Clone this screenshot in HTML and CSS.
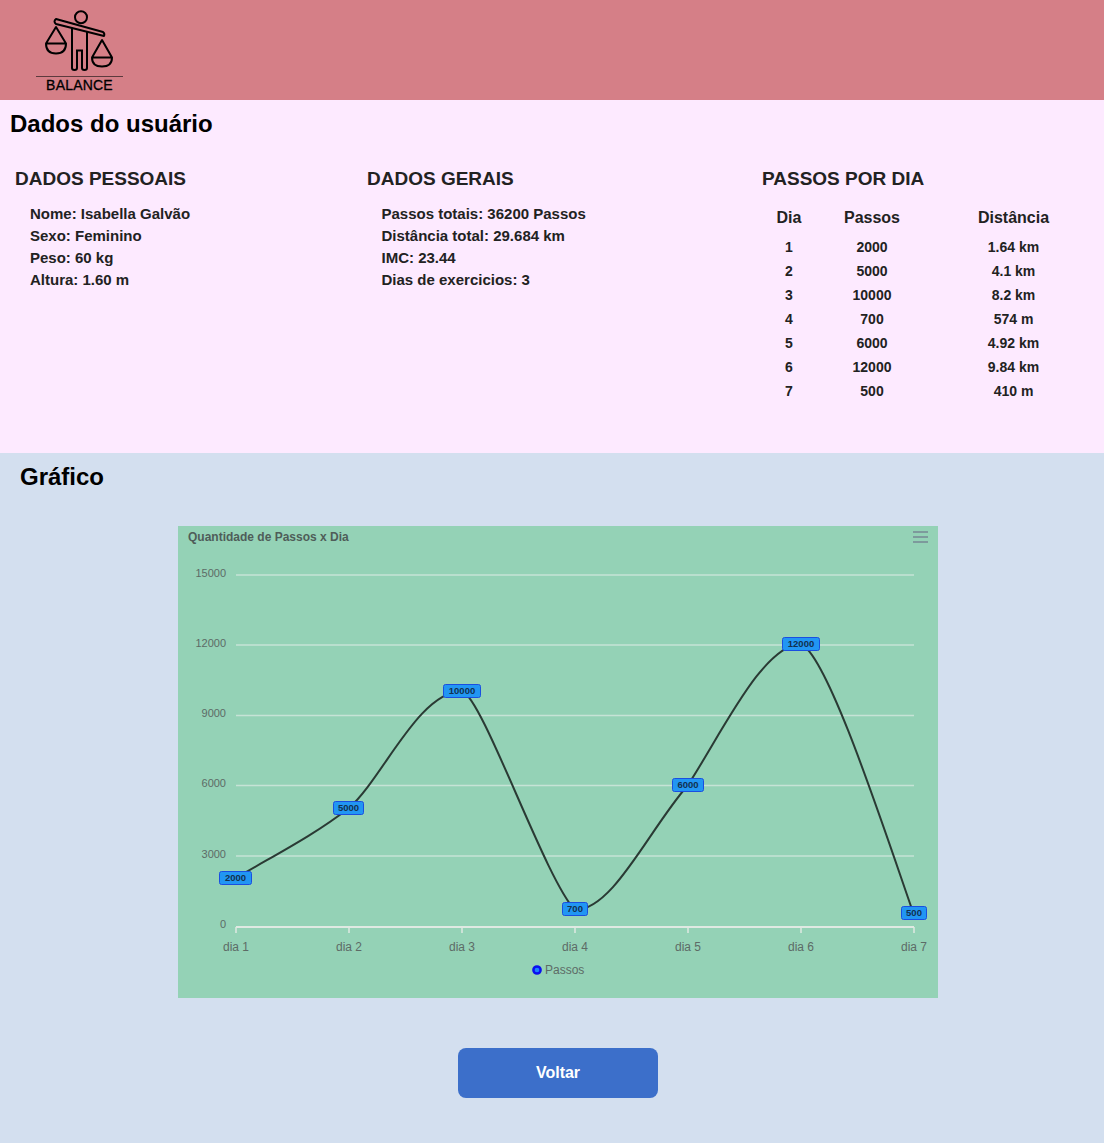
FILE: index.html
```html
<!DOCTYPE html>
<html lang="pt-BR">
<head>
  <meta charset="UTF-8">
  <meta name="viewport" content="width=device-width, initial-scale=1.0">
  <title>Balance</title>
  <link rel="stylesheet" href="styles.css">
</head>
<body>
  <header class="topo">
    <div class="logo">
      <svg class="logo-icone" viewBox="0 0 87 76" width="87" height="76" aria-hidden="true">
        <circle cx="45" cy="17.300" r="6" fill="none" stroke="#000" stroke-width="2"/>
        <path d="M20 19 L67 32 Q69 33.500 68 36 L20 24 Q17 21.500 20 19 Z" fill="none" stroke="#000" stroke-width="2" stroke-linejoin="round"/>
        <path d="M36 27.500 V68 Q36 70 38.500 70 Q41 70 41 68 V50.500 H46 V68 Q46 70 48.500 70 Q51 70 51 68 V31" fill="none" stroke="#000" stroke-width="2"/>
        <path d="M20 27 L10 43.500 H30 Z M10 43.500 Q10 53.500 20 53.500 Q30 53.500 30 43.500" fill="none" stroke="#000" stroke-width="2" stroke-linejoin="round"/>
        <path d="M66 40 L56 57.500 H76 Z M56 57.500 Q56 66.500 66 66.500 Q76 66.500 76 57.500" fill="none" stroke="#000" stroke-width="2" stroke-linejoin="round"/>
      </svg>
      <div class="logo-nome">BALANCE</div>
    </div>
  </header>

  <section class="dados">
    <h1 class="dados-titulo">Dados do usuário</h1>
    <div class="colunas">
      <div class="coluna coluna-pessoais">
        <h2>DADOS PESSOAIS</h2>
        <p>Nome: Isabella Galvão</p>
        <p>Sexo: Feminino</p>
        <p>Peso: 60 kg</p>
        <p>Altura: 1.60 m</p>
      </div>
      <div class="coluna coluna-gerais">
        <h2>DADOS GERAIS</h2>
        <p>Passos totais: 36200 Passos</p>
        <p>Distância total: 29.684 km</p>
        <p>IMC: 23.44</p>
        <p>Dias de exercicios: 3</p>
      </div>
      <div class="coluna coluna-passos">
        <h2>PASSOS POR DIA</h2>
        <table class="tabela">
          <thead>
            <tr><th class="col-dia">Dia</th><th class="col-passos">Passos</th><th class="col-dist">Distância</th></tr>
          </thead>
          <tbody>
            <tr><td>1</td><td>2000</td><td>1.64 km</td></tr>
            <tr><td>2</td><td>5000</td><td>4.1 km</td></tr>
            <tr><td>3</td><td>10000</td><td>8.2 km</td></tr>
            <tr><td>4</td><td>700</td><td>574 m</td></tr>
            <tr><td>5</td><td>6000</td><td>4.92 km</td></tr>
            <tr><td>6</td><td>12000</td><td>9.84 km</td></tr>
            <tr><td>7</td><td>500</td><td>410 m</td></tr>
          </tbody>
        </table>
      </div>
    </div>
  </section>

  <section class="grafico">
    <h1 class="grafico-titulo">Gráfico</h1>
    <div class="grafico-caixa">
      <svg class="chart" viewBox="0 0 760 472" width="760" height="472">
        <text class="chart-titulo" x="10" y="15">Quantidade de Passos x Dia</text>
        <g class="chart-menu">
          <rect x="735" y="5" width="15" height="2"/>
          <rect x="735" y="10" width="15" height="2"/>
          <rect x="735" y="15" width="15" height="2"/>
        </g>

        <g class="grade">
          <line x1="58" x2="736" y1="49" y2="49"/>
          <line x1="58" x2="736" y1="119" y2="119"/>
          <line x1="58" x2="736" y1="189.500" y2="189.500"/>
          <line x1="58" x2="736" y1="259.500" y2="259.500"/>
          <line x1="58" x2="736" y1="330" y2="330"/>
        </g>
        <g class="eixo">
          <line x1="58" x2="736" y1="401" y2="401"/>
          <line x1="58" x2="58" y1="401" y2="407"/>
          <line x1="171" x2="171" y1="401" y2="407"/>
          <line x1="284" x2="284" y1="401" y2="407"/>
          <line x1="397" x2="397" y1="401" y2="407"/>
          <line x1="510" x2="510" y1="401" y2="407"/>
          <line x1="623" x2="623" y1="401" y2="407"/>
          <line x1="736" x2="736" y1="401" y2="407"/>
        </g>

        <g class="rotulo-y">
          <text x="48" y="51">15000</text>
          <text x="48" y="121">12000</text>
          <text x="48" y="191">9000</text>
          <text x="48" y="261">6000</text>
          <text x="48" y="332">3000</text>
          <text x="48" y="402">0</text>
        </g>
        <g class="rotulo-x">
          <text x="58" y="425">dia 1</text>
          <text x="171" y="425">dia 2</text>
          <text x="284" y="425">dia 3</text>
          <text x="397" y="425">dia 4</text>
          <text x="510" y="425">dia 5</text>
          <text x="623" y="425">dia 6</text>
          <text x="736" y="425">dia 7</text>
        </g>

        <path class="linha" d="M58 352 C 95 330, 135 310, 171 282 C 205 252, 240 166, 284 165 C 305 172, 367 353, 397 384 C 435 384, 470 305, 510 259 C 545 205, 585 119, 623 118 C 650 130, 706 303, 736 389"/>

        <g class="marca">
          <rect x="41.500" y="345.500" width="32" height="13" rx="2"/>
          <text x="57.500" y="355">2000</text>
          <rect x="155.500" y="275.500" width="30" height="13" rx="2"/>
          <text x="170.500" y="285">5000</text>
          <rect x="265.500" y="158.500" width="37" height="13" rx="2"/>
          <text x="284" y="168">10000</text>
          <rect x="384.500" y="376.500" width="25" height="13" rx="2"/>
          <text x="397" y="386">700</text>
          <rect x="494.500" y="252.500" width="31" height="13" rx="2"/>
          <text x="510" y="262">6000</text>
          <rect x="604.500" y="111.500" width="37" height="13" rx="2"/>
          <text x="623" y="121">12000</text>
          <rect x="723.500" y="380.500" width="25" height="13" rx="2"/>
          <text x="736" y="390">500</text>
        </g>

        <circle class="legenda-ponto" cx="359" cy="444" r="3.600"/>
        <text class="legenda" x="367" y="448">Passos</text>
      </svg>
    </div>
    <div class="acoes">
      <button class="voltar" type="button">Voltar</button>
    </div>
  </section>
</body>
</html>
```

FILE: styles.css
```css
* {
  box-sizing: border-box;
}

body {
  margin: 0;
  font-family: "Liberation Sans", Arial, sans-serif;
  color: #222;
  background: #d3dfef;
}

.topo {
  height: 100px;
  background: #d57f87;
  padding-left: 36px;
}

.logo {
  width: 87px;
  height: 100px;
  display: flex;
  flex-direction: column;
}

.logo-icone {
  display: block;
  flex: none;
}

.logo-nome {
  border-top: 1px solid #5c3a3d;
  font-size: 14px;
  color: #000;
  text-align: center;
  line-height: 16px;
  letter-spacing: 0.2px;
  -webkit-text-stroke: 0.3px #000;
}

.dados {
  height: 353px;
  background: #fdeaff;
}

.dados-titulo {
  margin: 0;
  padding: 10px 0 0 10px;
  font-size: 24px;
  line-height: 28px;
  color: #000;
}

.colunas {
  display: flex;
  padding-top: 27px;
}

.coluna h2 {
  margin: 0 0 10px;
  font-size: 19px;
  line-height: 28px;
  color: #222;
}

.coluna p {
  margin: 0;
  padding-left: 15px;
  font-size: 15px;
  font-weight: 700;
  line-height: 22px;
}

.coluna-pessoais {
  margin-left: 15px;
  width: 352px;
}

.coluna-gerais {
  width: 395px;
}

.coluna-gerais p {
  padding-left: 14.500px;
}

.tabela {
  border-collapse: collapse;
}

.tabela th {
  font-size: 16px;
  font-weight: 700;
  height: 32px;
  padding: 0 0 2px;
}

.tabela td {
  font-size: 14px;
  font-weight: 700;
  text-align: center;
  height: 24px;
  padding: 0;
}

.col-dia {
  width: 54px;
}

.col-passos {
  width: 112px;
}

.col-dist {
  width: 171px;
}

.grafico {
  height: 690px;
  padding-top: 10px;
}

.grafico-titulo {
  margin: 0;
  padding-left: 20px;
  font-size: 24px;
  line-height: 28px;
  color: #000;
}

.grafico-caixa {
  width: 760px;
  height: 472px;
  margin: 35px 0 0 178px;
  background: #94d2b6;
}

.chart {
  display: block;
  font-family: "Liberation Sans", Arial, sans-serif;
}

.chart-titulo {
  font-size: 12px;
  font-weight: 700;
  fill: #4f5d59;
}

.chart-menu rect {
  fill: #7d9a9c;
}

.grade line {
  stroke: #c6e3d6;
  stroke-width: 1.500;
}

.eixo line {
  stroke: #dfe9e2;
  stroke-width: 1.500;
}

.eixo line:first-child {
  stroke-width: 2;
}

.rotulo-y text {
  font-size: 11px;
  text-anchor: end;
  fill: #5d6b66;
}

.rotulo-x text {
  font-size: 12px;
  text-anchor: middle;
  fill: #5d6b66;
}

.linha {
  fill: none;
  stroke: #2a3a34;
  stroke-width: 2;
}

.marca rect {
  fill: #2196f3;
  stroke: #1a4fe0;
  stroke-width: 1;
}

.marca text {
  font-size: 9.500px;
  font-weight: 700;
  text-anchor: middle;
  fill: #12314f;
}

.legenda-ponto {
  fill: #1e80ff;
  stroke: #0a10f0;
  stroke-width: 2.500;
}

.legenda {
  font-size: 12px;
  fill: #5d6b66;
}

.acoes {
  display: flex;
  justify-content: center;
  padding: 50px 0 0 12px;
}

.voltar {
  width: 200px;
  height: 50px;
  border: 0;
  border-radius: 8px;
  background: #3c6fca;
  color: #fff;
  font-family: inherit;
  font-size: 16px;
  font-weight: 700;
  cursor: pointer;
}
```
